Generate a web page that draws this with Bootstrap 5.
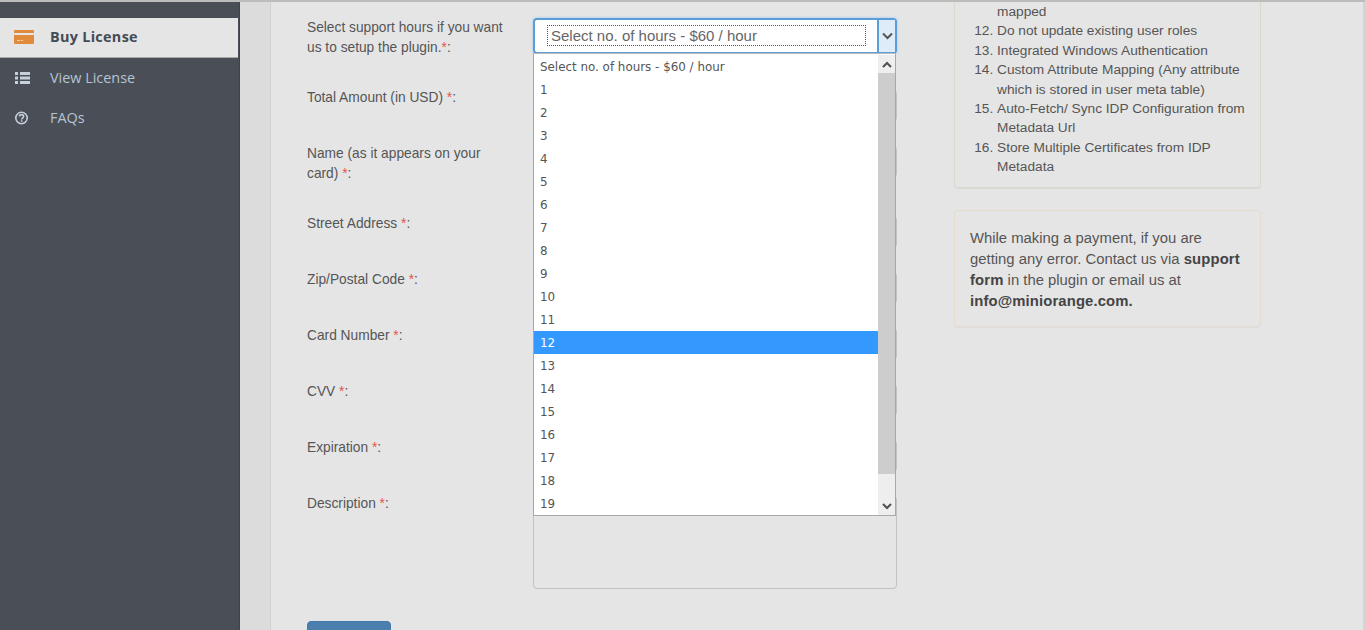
<!DOCTYPE html>
<html lang="en">
<head>
<meta charset="utf-8">
<title>Buy License</title>
<link href="https://cdn.jsdelivr.net/npm/bootstrap@5.3.0/dist/css/bootstrap.min.css" rel="stylesheet">
<style>
html,body{height:630px;overflow:hidden}
body{background:#e5e5e5;font-family:"Liberation Sans",Arial,sans-serif;font-size:13.750px;color:#555}
.shell{height:630px;overflow:hidden;border-top:2px solid #bcbcbc}
.side{width:240px;flex:none;background:#4a4f57;border-right:1px solid #3f4349;padding-top:15.500px;color:#b4c3d2;font-family:"Open Sans",sans-serif;font-size:14.400px}
.sitem{height:40px;padding-left:14px;gap:16px}
.sitem svg{flex:none;width:20px}
.sitem.on{background:#e5e5e5;color:#444b55;font-weight:700;font-size:14.400px;letter-spacing:.3px;border-bottom:1px solid #a9a9a9;margin-right:1px}
.gutter{width:31px;flex:none;background:#dcdcdc;border-right:1px solid #cfcfcf}
.panel{flex:1;border-right:2px solid #d4d4d4;padding-left:36px;min-width:0}
.formcol{width:590px;flex:none;padding-top:15px}
.frow{min-height:56px}
.frow.tall{min-height:70px}
.frow.last{min-height:128px}
.lab{width:226px;flex:none;padding-right:20px;line-height:20px;padding-top:1px}
.star{color:#e5534b}
.field{width:364px;height:32px;margin-top:3px;border:1px solid #c2c2c2;border-radius:4px;background:#e5e5e5}
.field.tall{height:93px}
.field.pick{height:36px;margin-top:1px;border:0}
.pay{width:84px;height:34px;background:#4a7fae;border:1px solid #4478a6;border-radius:4px;display:block;padding:0}
.selbox{position:relative;width:364px;height:36px;background:#fff;border:2px solid #5b9dd9;border-radius:4px;box-shadow:0 0 3px #9cc7ee;padding:5px 0 0 12px;font-size:15px;color:#666;line-height:19px}
.dots{display:block;width:319px;height:21px;border:1px dotted #555;padding-left:3px}
.arrow{position:absolute;right:0;top:0;bottom:0;width:18px;background:#deebf8;border-left:2px solid #5b9dd9}
.drop{position:absolute;left:0;top:35px;width:363px;height:463px;background:#fff;border:1px solid #a8a8a8;border-top-color:#bbb;font-family:"DejaVu Sans",sans-serif;font-size:11.900px;color:#555;z-index:5;padding-top:1px}
.opts{flex:1;overflow:hidden;min-width:0}
.opt{height:23px;line-height:24px;padding-left:6px}
.opt.hit{background:#3399ff;color:#fff}
.bar{width:17px;flex:none;background:#eee}
.barbtn{height:18px;flex:none}
.thumb{height:401px;background:#cdcdcd;flex:none}
.infocol{width:307px;flex:none;margin-left:57px}
.feat{border:1px solid #d5dccd;border-top:0;border-radius:0 0 4px 4px;height:186px;padding:0 12px 0 0;box-shadow:0 1px 1px #d9d9d9}
.feat ol{margin:0;padding:0 0 0 42px;line-height:19.400px;font-size:13.700px}
.feat .cont{list-style:none}
.note{border:1px solid #e6dccb;border-radius:4px;height:117px;margin-top:22px;padding:17px 15px 0;font-size:14.850px;line-height:20.900px;box-shadow:0 1px 1px #dcdcdc}
.note b{color:#444;letter-spacing:.12px}
</style>
</head>
<body>
<div class="shell d-flex">
  <aside class="side">
    <div class="sitem on d-flex align-items-center">
      <svg height="14" viewBox="0 0 20 14"><path fill="#e08a3c" d="M1 0h18a1 1 0 0 1 1 1v2H0V1a1 1 0 0 1 1-1zM0 5h20v8a1 1 0 0 1-1 1H1a1 1 0 0 1-1-1z"/><path fill="#f3cfa6" d="M3 10h3v1H3zM7 10h2v1H7z"/></svg>
      <span>Buy License</span>
    </div>
    <div class="sitem d-flex align-items-center">
      <svg height="12" viewBox="0 0 20 12"><path fill="#c6d0da" d="M1 0h3v3H1zM6 0h10v3H6zM1 4.500h3v3H1zM6 4.500h10v3H6zM1 9h3v3H1zM6 9h10v3H6z"/></svg>
      <span>View License</span>
    </div>
    <div class="sitem d-flex align-items-center">
      <svg height="14" viewBox="0 0 20 14"><circle cx="7.500" cy="7" r="5.700" fill="none" stroke="#c6d0da" stroke-width="1.600"/><path fill="none" stroke="#c6d0da" stroke-width="1.600" d="M5.500 5.600c0-2.600 4.100-2.600 4.100 0 0 1.500-2 1.400-2 3"/><path fill="#c6d0da" d="M6.800 9.300h1.600v1.500H6.800z"/></svg>
      <span>FAQs</span>
    </div>
  </aside>
  <div class="gutter"></div>
  <main class="panel d-flex">
    <div class="formcol">
      <div class="frow tall d-flex">
        <div class="lab">Select support hours if you want us to setup the plugin.<span class="star">*</span>:</div>
        <div class="field pick position-relative">
          <div class="selbox"><span class="dots">Select no. of hours - $60 / hour</span>
            <span class="arrow d-flex align-items-center justify-content-center"><svg width="11" height="8" viewBox="0 0 11 8"><path fill="none" stroke="#555" stroke-width="2" d="M1 1.500l4.500 4.500 4.500-4.500"/></svg></span>
          </div>
          <div class="drop d-flex">
            <div class="opts">
              <div class="opt">Select no. of hours - $60 / hour</div>
              <div class="opt">1</div><div class="opt">2</div><div class="opt">3</div><div class="opt">4</div><div class="opt">5</div><div class="opt">6</div><div class="opt">7</div><div class="opt">8</div><div class="opt">9</div><div class="opt">10</div><div class="opt">11</div>
              <div class="opt hit">12</div>
              <div class="opt">13</div><div class="opt">14</div><div class="opt">15</div><div class="opt">16</div><div class="opt">17</div><div class="opt">18</div><div class="opt">19</div>
            </div>
            <div class="bar d-flex flex-column">
              <div class="barbtn d-flex align-items-center justify-content-center"><svg width="10" height="7" viewBox="0 0 10 7"><path fill="none" stroke="#505050" stroke-width="2" d="M1 6l4-4 4 4"/></svg></div>
              <div class="thumb"></div>
              <div class="flex-grow-1"></div>
              <div class="barbtn d-flex align-items-center justify-content-center"><svg width="10" height="7" viewBox="0 0 10 7"><path fill="none" stroke="#505050" stroke-width="2" d="M1 1l4 4 4-4"/></svg></div>
            </div>
          </div>
        </div>
      </div>
      <div class="frow d-flex"><div class="lab">Total Amount (in USD) <span class="star">*</span>:</div><div class="field"></div></div>
      <div class="frow tall d-flex"><div class="lab">Name (as it appears on your card) <span class="star">*</span>:</div><div class="field"></div></div>
      <div class="frow d-flex"><div class="lab">Street Address <span class="star">*</span>:</div><div class="field"></div></div>
      <div class="frow d-flex"><div class="lab">Zip/Postal Code <span class="star">*</span>:</div><div class="field"></div></div>
      <div class="frow d-flex"><div class="lab">Card Number <span class="star">*</span>:</div><div class="field"></div></div>
      <div class="frow d-flex"><div class="lab">CVV <span class="star">*</span>:</div><div class="field"></div></div>
      <div class="frow d-flex"><div class="lab">Expiration <span class="star">*</span>:</div><div class="field"></div></div>
      <div class="frow last d-flex"><div class="lab">Description <span class="star">*</span>:</div><div class="field tall"></div></div>
      <button class="pay" type="button" aria-label="Submit"></button>
    </div>
    <div class="infocol">
      <div class="feat">
        <ol start="12">
          <li class="cont">mapped</li>
          <li value="12">Do not update existing user roles</li>
          <li>Integrated Windows Authentication</li>
          <li>Custom Attribute Mapping (Any attribute which is stored in user meta table)</li>
          <li>Auto-Fetch/ Sync IDP Configuration from Metadata Url</li>
          <li>Store Multiple Certificates from IDP Metadata</li>
        </ol>
      </div>
      <div class="note">While making a payment, if you are getting any error. Contact us via <b>support form</b> in the plugin or email us at <b>info@miniorange.com.</b></div>
    </div>
  </main>
</div>
<script src="https://cdn.jsdelivr.net/npm/bootstrap@5.3.0/dist/js/bootstrap.bundle.min.js"></script>
</body>
</html>
